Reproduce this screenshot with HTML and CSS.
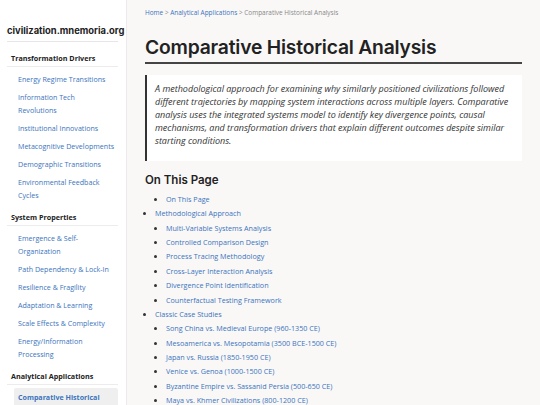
FILE: index.html
```html
<!DOCTYPE html>
<html lang="en">
<head>
<meta charset="utf-8">
<title>Comparative Historical Analysis</title>
<link rel="stylesheet" href="styles.css">
</head>
<body>
<div class="layout">
  <aside class="sidebar">
    <div class="site-title">civilization.mnemoria.org</div>
    <div class="nav-section">
      <div class="nav-head">Transformation Drivers</div>
      <ul class="nav-list">
        <li><a href="#">Energy Regime Transitions</a></li>
        <li><a href="#">Information Tech Revolutions</a></li>
        <li><a href="#">Institutional Innovations</a></li>
        <li><a href="#">Metacognitive Developments</a></li>
        <li><a href="#">Demographic Transitions</a></li>
        <li><a href="#">Environmental Feedback Cycles</a></li>
      </ul>
    </div>
    <div class="nav-section">
      <div class="nav-head">System Properties</div>
      <ul class="nav-list">
        <li><a href="#">Emergence &amp; Self-Organization</a></li>
        <li><a href="#">Path Dependency &amp; Lock-In</a></li>
        <li><a href="#">Resilience &amp; Fragility</a></li>
        <li><a href="#">Adaptation &amp; Learning</a></li>
        <li><a href="#">Scale Effects &amp; Complexity</a></li>
        <li><a href="#">Energy/Information Processing</a></li>
      </ul>
    </div>
    <div class="nav-section">
      <div class="nav-head">Analytical Applications</div>
      <ul class="nav-list">
        <li class="active"><a href="#">Comparative Historical Analysis</a></li>
        <li><a href="#">Predictive Modeling</a></li>
      </ul>
    </div>
  </aside>
  <main class="content">
    <nav class="breadcrumb"><a href="#">Home</a> &gt; <a href="#">Analytical Applications</a> &gt; <span>Comparative Historical Analysis</span></nav>
    <h1 class="page-title">Comparative Historical Analysis</h1>
    <blockquote class="summary">A methodological approach for examining why similarly positioned civilizations followed different trajectories by mapping system interactions across multiple layers. Comparative analysis uses the integrated systems model to identify key divergence points, causal mechanisms, and transformation drivers that explain different outcomes despite similar starting conditions.</blockquote>
    <h2 class="toc-title">On This Page</h2>
    <ul class="toc">
      <li class="sub-wrap"><ul class="toc-sub"><li><a href="#">On This Page</a></li></ul></li>
      <li><a href="#">Methodological Approach</a>
        <ul class="toc-sub">
          <li><a href="#">Multi-Variable Systems Analysis</a></li>
          <li><a href="#">Controlled Comparison Design</a></li>
          <li><a href="#">Process Tracing Methodology</a></li>
          <li><a href="#">Cross-Layer Interaction Analysis</a></li>
          <li><a href="#">Divergence Point Identification</a></li>
          <li><a href="#">Counterfactual Testing Framework</a></li>
        </ul>
      </li>
      <li><a href="#">Classic Case Studies</a>
        <ul class="toc-sub">
          <li><a href="#">Song China vs. Medieval Europe (960-1350 CE)</a></li>
          <li><a href="#">Mesoamerica vs. Mesopotamia (3500 BCE-1500 CE)</a></li>
          <li><a href="#">Japan vs. Russia (1850-1950 CE)</a></li>
          <li><a href="#">Venice vs. Genoa (1000-1500 CE)</a></li>
          <li><a href="#">Byzantine Empire vs. Sassanid Persia (500-650 CE)</a></li>
          <li><a href="#">Maya vs. Khmer Civilizations (800-1200 CE)</a></li>
        </ul>
      </li>
    </ul>
  </main>
</div>
</body>
</html>
```

FILE: styles.css
```css
html, body {
  margin: 0;
  padding: 0;
}
body {
  background: #f9f8f7;
  font-family: "Open Sans", "Liberation Sans", sans-serif;
  color: #333;
  height: 405px;
  overflow: hidden;
}
a {
  color: #3b74bd;
  text-decoration: none;
}
.layout {
  display: flex;
  align-items: flex-start;
}
.sidebar {
  width: 127px;
  flex: none;
  box-sizing: border-box;
  background: #fff;
  border-right: 1px solid #ebebeb;
  padding: 25px 8px 0 7px;
  min-height: 405px;
}
.site-title {
  font-family: Inter, "DejaVu Sans", sans-serif;
  font-weight: 700;
  font-size: 9.4px;
  line-height: 12px;
  color: #222;
  padding-bottom: 4px;
  margin-bottom: 11px;
  border-bottom: 1px solid #e6e6e6;
  white-space: nowrap;
}
.nav-section {
  margin-top: 8px;
}
.nav-head {
  font-size: 7.2px;
  line-height: 10px;
  font-weight: 700;
  color: #222;
  padding: 0 0 3px 4px;
  border-bottom: 1px solid #ececec;
}
.nav-list {
  list-style: none;
  margin: 0;
  padding: 3px 0 0 7px;
}
.nav-list li {
  font-size: 7.1px;
  line-height: 13px;
  padding: 2.5px 3px 2.5px 4px;
}
.nav-list li.active {
  background: #efefef;
  border-radius: 2px;
}
.nav-list li.active a {
  font-weight: 700;
}
.content {
  flex: 1;
  padding: 8px 18px 0 18px;
  min-width: 0;
}
.breadcrumb {
  font-size: 6.45px;
  color: #888;
  line-height: 10px;
}
.breadcrumb span {
  color: #888;
}
.page-title {
  font-family: Inter, "DejaVu Sans", sans-serif;
  font-weight: 600;
  font-size: 19.3px;
  letter-spacing: -0.2px;
  color: #222;
  margin: 17px 0 0 0;
  padding-bottom: 3px;
  border-bottom: 2px solid #444;
  line-height: 24px;
}
.summary {
  margin: 11px 0 0 0;
  background: #fff;
  border-left: 2px solid #333;
  padding: 8px 12px 13px 8px;
  font-style: italic;
  font-size: 9px;
  line-height: 12.9px;
  color: #333;
}
.toc-title {
  font-family: Inter, "DejaVu Sans", sans-serif;
  font-weight: 600;
  font-size: 11.5px;
  line-height: 14px;
  color: #222;
  margin: 12.5px 0 5px 0;
}
.toc {
  margin: 0;
  padding: 0 0 0 10px;
  list-style: disc;
  font-size: 7.2px;
  line-height: 14.36px;
}
.toc li::marker {
  color: #333;
}
.toc-sub {
  margin: 0;
  padding: 0 0 0 11px;
  list-style: disc;
}
.toc .sub-wrap {
  list-style: none;
}
```
